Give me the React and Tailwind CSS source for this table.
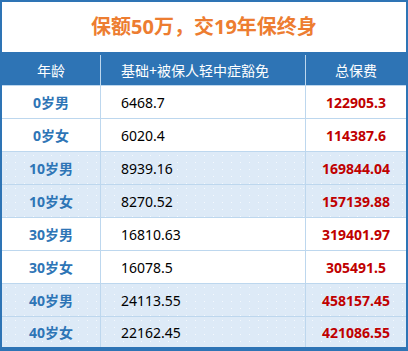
import React from "react";

const rows = [
  ["0岁男", "6468.7", "122905.3", false],
  ["0岁女", "6020.4", "114387.6", false],
  ["10岁男", "8939.16", "169844.04", true],
  ["10岁女", "8270.52", "157139.88", true],
  ["30岁男", "16810.63", "319401.97", false],
  ["30岁女", "16078.5", "305491.5", false],
  ["40岁男", "24113.55", "458157.45", true],
  ["40岁女", "22162.45", "421086.55", true],
];

export default function App() {
  return (
    <div
      className="w-[408px] h-[351px] flex flex-col bg-white border-t-2 border-x-2 border-b-4 border-[#2e74b5] overflow-hidden"
      style={{ fontFamily: '"Noto Sans", "Noto Sans CJK SC", sans-serif' }}
    >
      <div className="h-[50px] flex items-center justify-center text-[20px] font-bold text-[#ed7d31]">
        保额50万，交19年保终身
      </div>
      <div className="h-[34px] bg-[#2e74b5] pt-[3px] grid grid-cols-[99px_205px_1fr] text-white text-[14px] border-b border-[#bdd7ee]">
        <div className="flex items-center justify-center border-r border-[#bdd7ee]">年龄</div>
        <div className="flex items-center pl-[20px] border-r border-[#bdd7ee]">基础+被保人轻中症豁免</div>
        <div className="flex items-center justify-center">总保费</div>
      </div>
      <div className="flex-1 flex flex-col">
        {rows.map(([age, base, total, shaded], i) => (
          <div
            key={i}
            className={
              "grid grid-cols-[99px_205px_1fr] text-[14px] " +
              (i < rows.length - 1 ? "h-[33px] border-b border-[#bdd7ee] " : "flex-1 ") +
              (shaded
                ? "bg-[#ddeaf7] bg-[radial-gradient(#f4f9fe_0.6px,transparent_0.8px)] bg-[length:9px_7px]"
                : "bg-white")
            }
          >
            <div className="flex items-center justify-center border-r border-[#bdd7ee] font-bold text-[#2e75b6]">
              {age}
            </div>
            <div className="flex items-center pl-[20px] border-r border-[#bdd7ee] text-black">{base}</div>
            <div className="flex items-center justify-center font-bold text-[#c00000]">{total}</div>
          </div>
        ))}
      </div>
    </div>
  );
}
